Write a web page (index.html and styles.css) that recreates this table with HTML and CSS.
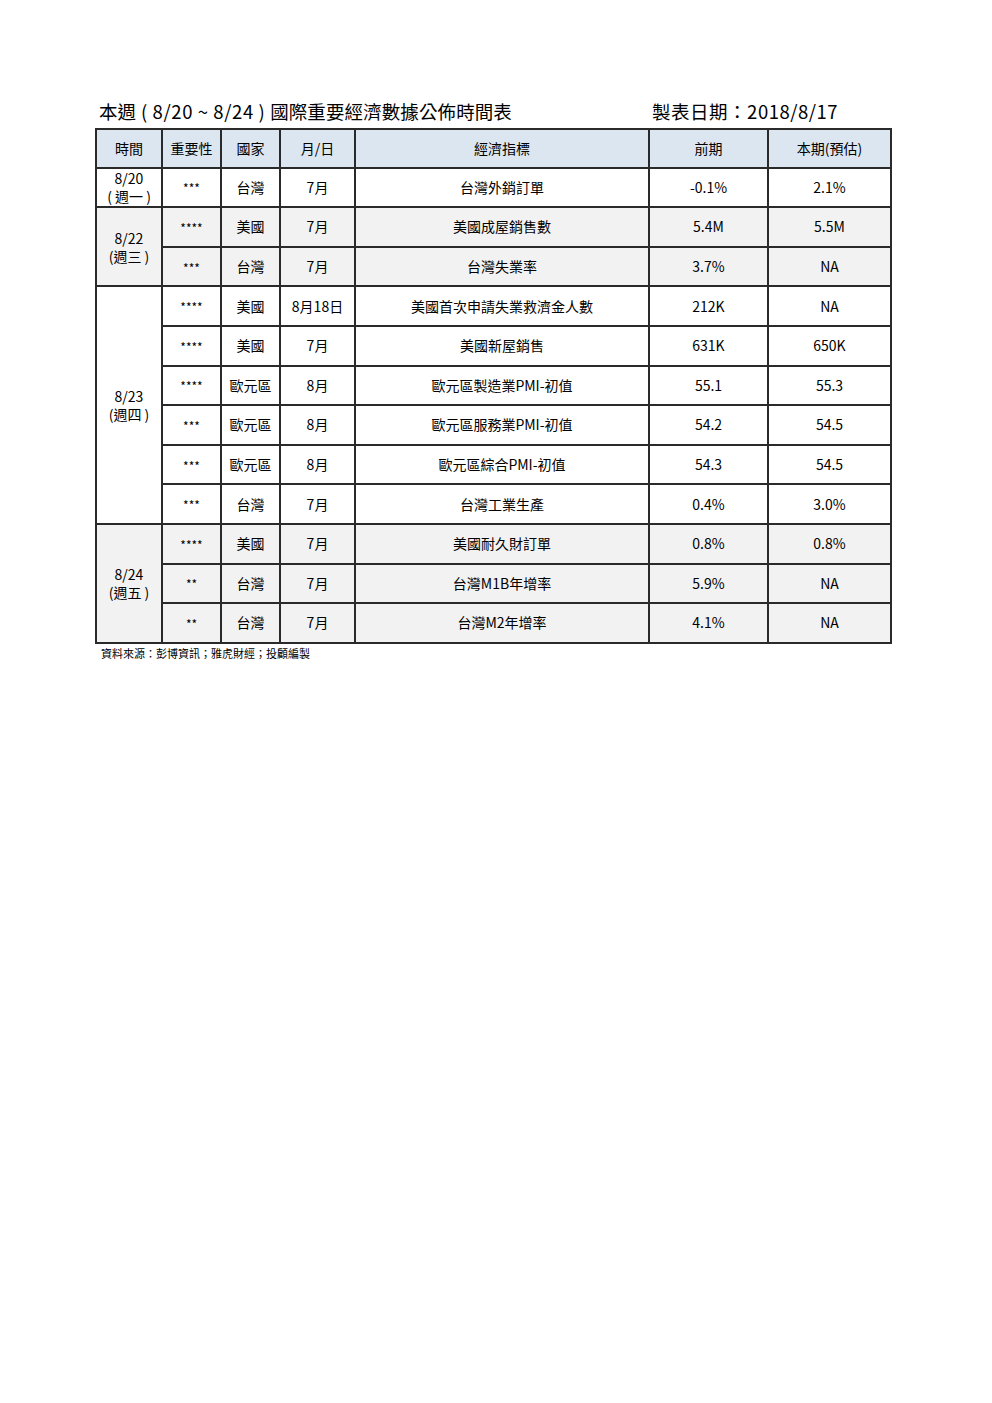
FILE: index.html
```html
<!DOCTYPE html>
<html lang="zh-Hant">
<head>
<meta charset="utf-8">
<title>國際重要經濟數據公佈時間表</title>
<link rel="stylesheet" href="styles.css">
</head>
<body>
<div class="page">
  <div class="heading">
    <div class="title">本週<span class="range"> ( 8/20 ~ 8/24 ) </span>國際重要經濟數據公佈時間表</div>
    <div class="date">製表日期：2018/8/17</div>
  </div>
  <table class="sched">
    <colgroup>
      <col class="c1"><col class="c2"><col class="c3"><col class="c4"><col class="c5"><col class="c6"><col class="c7">
    </colgroup>
    <thead>
      <tr><th>時間</th><th>重要性</th><th>國家</th><th>月/日</th><th>經濟指標</th><th>前期</th><th>本期(預估)</th></tr>
    </thead>
    <tbody>
      <tr><td class="day">8/20<br>( 週一 )</td><td class="star">***</td><td>台灣</td><td>7月</td><td>台灣外銷訂單</td><td>-0.1%</td><td>2.1%</td></tr>
    </tbody>
    <tbody class="gray">
      <tr><td class="day" rowspan="2">8/22<br>(週三 )</td><td class="star">****</td><td>美國</td><td>7月</td><td>美國成屋銷售數</td><td>5.4M</td><td>5.5M</td></tr>
      <tr><td class="star">***</td><td>台灣</td><td>7月</td><td>台灣失業率</td><td>3.7%</td><td>NA</td></tr>
    </tbody>
    <tbody>
      <tr><td class="day" rowspan="6">8/23<br>(週四 )</td><td class="star">****</td><td>美國</td><td>8月18日</td><td>美國首次申請失業救濟金人數</td><td>212K</td><td>NA</td></tr>
      <tr><td class="star">****</td><td>美國</td><td>7月</td><td>美國新屋銷售</td><td>631K</td><td>650K</td></tr>
      <tr><td class="star">****</td><td>歐元區</td><td>8月</td><td>歐元區製造業PMI-初值</td><td>55.1</td><td>55.3</td></tr>
      <tr><td class="star">***</td><td>歐元區</td><td>8月</td><td>歐元區服務業PMI-初值</td><td>54.2</td><td>54.5</td></tr>
      <tr><td class="star">***</td><td>歐元區</td><td>8月</td><td>歐元區綜合PMI-初值</td><td>54.3</td><td>54.5</td></tr>
      <tr><td class="star">***</td><td>台灣</td><td>7月</td><td>台灣工業生產</td><td>0.4%</td><td>3.0%</td></tr>
    </tbody>
    <tbody class="gray">
      <tr><td class="day" rowspan="3">8/24<br>(週五 )</td><td class="star">****</td><td>美國</td><td>7月</td><td>美國耐久財訂單</td><td>0.8%</td><td>0.8%</td></tr>
      <tr><td class="star">**</td><td>台灣</td><td>7月</td><td>台灣M1B年增率</td><td>5.9%</td><td>NA</td></tr>
      <tr><td class="star">**</td><td>台灣</td><td>7月</td><td>台灣M2年增率</td><td>4.1%</td><td>NA</td></tr>
    </tbody>
  </table>
  <div class="source">資料來源：彭博資訊；雅虎財經；投顧編製</div>
</div>
</body>
</html>
```

FILE: styles.css
```css
html, body {
  margin: 0;
  padding: 0;
  background: #ffffff;
}
body {
  font-family: "Noto Sans CJK TC", "Noto Sans", sans-serif;
  color: #000;
}
.page {
  padding: 98px 0 0 95px;
  width: 795px;
}
.heading {
  display: flex;
  justify-content: space-between;
  align-items: baseline;
  padding: 0 52px 0 4px;
  height: 30px;
  font-size: 18.5px;
  line-height: 26px;
}
.title {
  letter-spacing: 0.1px;
}
.range {
  letter-spacing: 0.6px;
  word-spacing: 0;
}
.date {
  letter-spacing: 0.5px;
}
.sched {
  border-collapse: collapse;
  width: 796px;
  table-layout: fixed;
  font-size: 14px;
  line-height: 17px;
}
.c1 { width: 66px; }
.c2 { width: 59px; }
.c3 { width: 59px; }
.c4 { width: 75px; }
.c5 { width: 294px; }
.c6 { width: 119px; }
.c7 { width: 123px; }
.sched th, .sched td {
  border: 2px solid #2a2a2a;
  text-align: center;
  vertical-align: middle;
  padding: 0;
  height: 36.6px;
  font-weight: normal;
}
.sched th {
  background: #dce6f1;
}
.sched .gray td {
  background: #f2f2f2;
}
.sched td.star {
  font-size: 12px;
  padding-top: 1px;
}
.sched td.day {
  line-height: 18px;
}
.source {
  font-size: 11px;
  padding: 1px 0 0 6px;
  line-height: 16px;
}
```
